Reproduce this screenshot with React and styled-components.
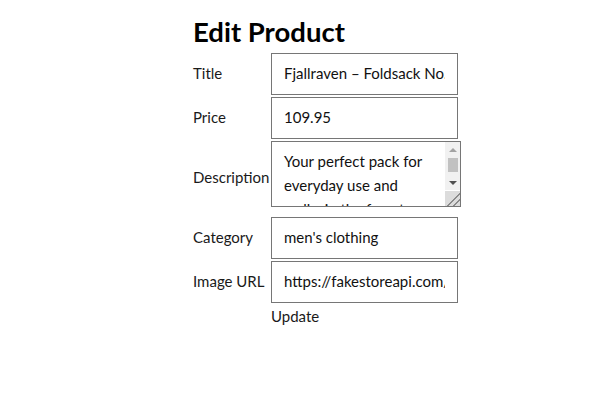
import React from "react";
import styled, { createGlobalStyle } from "styled-components";

const Global = createGlobalStyle`
  html, body { margin: 0; padding: 0; background: #fff; }
  body { font-family: Lato, "Noto Sans", sans-serif; color: #111; }
`;

const Page = styled.div`
  padding: 14px 0 0 193px;
`;

const Heading = styled.h1`
  margin: 0 0 3px;
  font-size: 27.5px;
  line-height: 36px;
  font-weight: 700;
  color: #000;
`;

const Form = styled.form`
  display: grid;
  grid-template-columns: 76px 190px;
  column-gap: 2px;
  row-gap: 2px;
  align-items: center;
  font-size: 15px;
`;

const Label = styled.label`
  color: #1a1a1a;
  white-space: nowrap;
  padding-bottom: 2px;
`;

const Cell = styled.div`
  height: ${(p) => p.$h}px;
  display: flex;
  align-items: flex-start;
`;

const Input = styled.input`
  box-sizing: border-box;
  width: 187px;
  height: 42px;
  margin: 0;
  padding: 0 12px 3px;
  border: 1px solid #767676;
  font: inherit;
  color: #111;
  background: #fff;
`;

const AreaWrap = styled.div`
  position: relative;
  width: 190px;
  height: 66px;
`;

const TextArea = styled.textarea`
  box-sizing: border-box;
  width: 190px;
  height: 66px;
  margin: 0;
  padding: 7px 27px 8px 12px;
  border: 1px solid #767676;
  font: inherit;
  line-height: 24px;
  color: #111;
  overflow: hidden;
  resize: both;

  &::-webkit-resizer {
    background:
      linear-gradient(135deg, transparent 0 56%, #8a8a8a 56% 61%, transparent 61% 76%, #8a8a8a 76% 81%, transparent 81%),
      #dcdcdc;
  }
`;

const ScrollBar = styled.div`
  position: absolute;
  top: 1px;
  right: 1px;
  width: 15px;
  height: 48px;
  background: #f1f1f1;
  display: flex;
  flex-direction: column;
  align-items: center;
  pointer-events: none;
`;

const Arrow = styled.div`
  height: 15px;
  width: 15px;
  display: flex;
  align-items: center;
  justify-content: center;

  &::before {
    content: "";
    width: 0;
    height: 0;
    border-left: 4px solid transparent;
    border-right: 4px solid transparent;
    ${(p) =>
      p.$up
        ? "border-bottom: 4px solid #a3a3a3;"
        : "border-top: 4px solid #505050;"}
  }
`;

const Track = styled.div`
  flex: 1;
  width: 15px;
  display: flex;
  justify-content: center;
  padding-top: 1px;
`;

const Thumb = styled.div`
  width: 10px;
  height: 14px;
  background: #c1c1c1;
`;

const Button = styled.button`
  grid-column: 2;
  justify-self: start;
  margin: 0;
  padding: 0;
  border: none;
  background: none;
  font: inherit;
  color: #1a1a1a;
  line-height: 22px;
  cursor: pointer;
`;

export default function App() {
  return (
    <>
      <Global />
      <Page>
        <Heading>Edit Product</Heading>
        <Form onSubmit={(e) => e.preventDefault()}>
          <Label>Title</Label>
          <Cell $h={42}>
            <Input defaultValue="Fjallraven – Foldsack No. 1 Backpack, Fits 15 Laptops" />
          </Cell>
          <Label>Price</Label>
          <Cell $h={42}>
            <Input defaultValue="109.95" />
          </Cell>
          <Label>Description</Label>
          <Cell $h={74}>
            <AreaWrap>
              <TextArea defaultValue="Your perfect pack for everyday use and walks in the forest. Stash your laptop (up to 15 inches) in the padded sleeve, your everyday" />
              <ScrollBar>
                <Arrow $up />
                <Track>
                  <Thumb />
                </Track>
                <Arrow />
              </ScrollBar>
            </AreaWrap>
          </Cell>
          <Label>Category</Label>
          <Cell $h={42}>
            <Input defaultValue="men's clothing" />
          </Cell>
          <Label>Image URL</Label>
          <Cell $h={42}>
            <Input defaultValue="https://fakestoreapi.com/img/81fPKd-2AYL._AC_SL1500_.jpg" />
          </Cell>
          <Button type="submit">Update</Button>
        </Form>
      </Page>
    </>
  );
}
